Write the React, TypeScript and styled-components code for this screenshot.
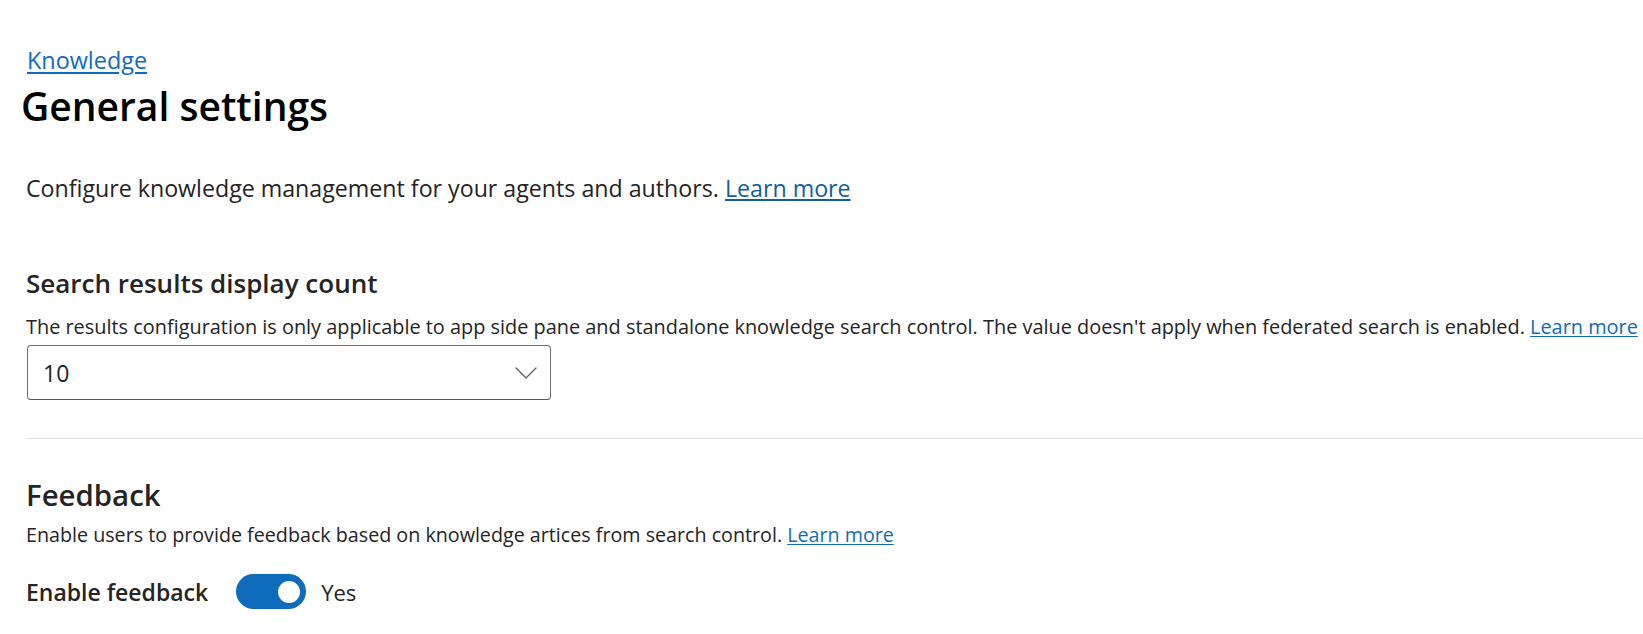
import React from "react";
import styled, { createGlobalStyle } from "styled-components";

const Global = createGlobalStyle`
  html, body { margin: 0; padding: 0; background: #ffffff; }
  body { font-family: "Open Sans", "Noto Sans", sans-serif; color: #242424; }
  * { box-sizing: border-box; }
`;

const Page = styled.main`
  display: flex;
  flex-direction: column;
  padding: 45px 0 0 26px;
  width: 1643px;
  overflow: hidden;
`;

const Breadcrumb = styled.a`
  font-size: 23.4px;
  line-height: 30px;
  color: #0f6cbd;
  text-decoration: underline;
  text-underline-offset: 3px;
  align-self: flex-start;
  margin-left: 1px;
`;

const Title = styled.h1`
  margin: 7px 0 0 -5px;
  font-size: 39px;
  line-height: 48px;
  font-weight: 600;
  color: #000000;
`;

const Intro = styled.p`
  margin: 43px 0 0 0;
  font-size: 23.2px;
  line-height: 30px;
  color: #242424;
  white-space: nowrap;
`;

const Link = styled.a<{ $dark?: boolean }>`
  color: ${(p) => (p.$dark ? "#115ea3" : "#0f6cbd")};
  text-decoration: underline;
  text-underline-offset: 2px;
`;

const SectionTitle = styled.h2<{ $size: number; $top: number; $lh: number }>`
  margin: ${(p) => p.$top}px 0 0 0;
  font-size: ${(p) => p.$size}px;
  line-height: ${(p) => p.$lh}px;
  font-weight: 600;
  color: #242424;
`;

const Description = styled.p<{ $top: number; $size: number }>`
  margin: ${(p) => p.$top}px 0 0 0;
  font-size: ${(p) => p.$size}px;
  line-height: 26px;
  color: #242424;
  white-space: nowrap;
`;

const Select = styled.div`
  margin-top: 5px;
  margin-left: 1px;
  width: 524px;
  height: 55px;
  display: flex;
  align-items: center;
  justify-content: space-between;
  padding: 0 13px 0 15px;
  border: 1px solid #6e6e6e;
  border-bottom-color: #575757;
  border-radius: 4px;
  font-size: 23px;
  line-height: 30px;
  color: #242424;
`;

const Divider = styled.hr`
  margin: 38px 0 0 0;
  border: none;
  height: 1px;
  background: #e0e0e0;
  width: 100%;
`;

const ToggleRow = styled.div`
  margin-top: 26px;
  display: flex;
  align-items: center;
  height: 35px;
`;

const ToggleLabel = styled.span`
  font-size: 23px;
  line-height: 30px;
  font-weight: 600;
  color: #242424;
  margin-right: 28px;
`;

const Switch = styled.div`
  width: 70px;
  height: 35px;
  border-radius: 18px;
  background: #0f6cbd;
  display: flex;
  align-items: center;
  justify-content: flex-end;
  padding-right: 6px;
`;

const Knob = styled.span`
  width: 22px;
  height: 22px;
  border-radius: 50%;
  background: #ffffff;
`;

const ToggleValue = styled.span`
  margin-left: 15px;
  font-size: 22px;
  line-height: 30px;
  color: #242424;
`;

const Chevron = () => (
  <svg width="22" height="12" viewBox="0 0 22 12" fill="none">
    <path d="M1 1 L11 11 L21 1" stroke="#616161" strokeWidth="1.4" strokeLinejoin="round" strokeLinecap="round" />
  </svg>
);

export default function App() {
  return (
    <>
      <Global />
      <Page>
        <Breadcrumb href="#">Knowledge</Breadcrumb>
        <Title>General settings</Title>
        <Intro>
          Configure knowledge management for your agents and authors.{" "}
          <Link $dark href="#">Learn more</Link>
        </Intro>

        <SectionTitle $size={26} $lh={32} $top={64}>Search results display count</SectionTitle>
        <Description $top={15} $size={19.9}>
          The results configuration is only applicable to app side pane and standalone knowledge search control. The
          value doesn't apply when federated search is enabled. <Link href="#">Learn more</Link>
        </Description>
        <Select>
          <span>10</span>
          <Chevron />
        </Select>

        <Divider />

        <SectionTitle $size={29.4} $lh={38} $top={37}>Feedback</SectionTitle>
        <Description $top={8} $size={19.7}>
          Enable users to provide feedback based on knowledge artices from search control.{" "}
          <Link href="#">Learn more</Link>
        </Description>

        <ToggleRow>
          <ToggleLabel>Enable feedback</ToggleLabel>
          <Switch>
            <Knob />
          </Switch>
          <ToggleValue>Yes</ToggleValue>
        </ToggleRow>
      </Page>
    </>
  );
}
